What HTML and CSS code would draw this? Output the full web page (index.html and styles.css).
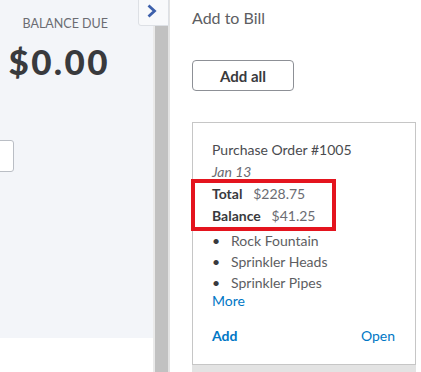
FILE: index.html
```html
<!DOCTYPE html>
<html lang="en">
<head>
  <meta charset="UTF-8">
  <title>Add to Bill</title>
  <link rel="stylesheet" href="styles.css">
</head>
<body>
  <div id="page">
    <div id="bill-panel">
      <div class="bill-body">
        <div class="balance">
          <span class="balance-label">BALANCE DUE</span>
          <span class="balance-amount">$0.00</span>
        </div>
        <div class="field-stub"></div>
      </div>
      <div class="bill-foot"></div>
    </div>

    <div id="splitter"></div>

    <button class="collapse-btn" title="Collapse">
      <svg width="12" height="14" viewBox="0 0 12 14"><path d="M2.5 1.5 L8.5 7 L2.5 12.5" fill="none" stroke="#3d60ab" stroke-width="2.8"/></svg>
    </button>

    <div id="drawer">
      <h2 class="drawer-title">Add to Bill</h2>
      <button class="add-all">Add all</button>

      <div class="card">
        <div class="card-title">Purchase Order #1005</div>
        <div class="card-date">Jan 13</div>
        <div class="totals">
          <div><b>Total</b>&nbsp;&nbsp; $228.75</div>
          <div><b>Balance</b>&nbsp;&nbsp; $41.25</div>
        </div>
        <ul class="items">
          <li>Rock Fountain</li>
          <li>Sprinkler Heads</li>
          <li>Sprinkler Pipes</li>
        </ul>
        <a class="more" href="#">More</a>
        <div class="card-actions">
          <a class="act-add" href="#">Add</a>
          <a class="act-open" href="#">Open</a>
        </div>
      </div>
      <div class="card next"></div>
    </div>
  </div>
</body>
</html>
```

FILE: styles.css
```css
body {
  margin:0;
  width:421px;
  height:372px;
  overflow:hidden;
  background:#fff;
  font-family:Lato, "Noto Sans", sans-serif;
  color:#393a3d;
}

#page {
  position:relative;
  display:flex;
  height:372px;
}

#bill-panel {
  width:153px;
  display:flex;
  flex-direction:column;
  flex:none;
}

.bill-body {
  height:338px;
  background:#f3f5f9;
  overflow:hidden;
}

.bill-foot {
  flex:1;
  background:#fff;
}

.balance {
  display:flex;
  flex-direction:column;
  align-items:flex-end;
  padding:15px 45px 0 0;
}

.balance-label {
  font-size:12.5px;
  line-height:18px;
  color:#6b6c72;
}

.balance-amount {
  font-size:35px;
  font-weight:900;
  line-height:44px;
  letter-spacing:2.4px;
  margin:6px -2px 0 0;
  color:#393a3d;
}

.field-stub {
  margin:57px 0 0 -10px;
  width:22px;
  height:30px;
  background:#fff;
  border:1px solid #babec5;
  border-radius:3px;
}

#splitter {
  width:13px;
  flex:none;
  background:#c1c1c1;
  border-left:2px solid #eaeaea;
  border-right:2px solid #e3e3e3;
}

.collapse-btn {
  position:absolute;
  left:138px;
  top:-1px;
  width:31px;
  height:27px;
  padding:0;
  background:#f8f9fb;
  border:1px solid #dde0e5;
  border-radius:0 0 0 3px;
  display:flex;
  align-items:center;
  justify-content:center;
}

.collapse-btn svg {
  margin:-3px 3px 0 0;
}

#drawer {
  flex:1;
  padding:0 5px 0 22px;
}

.drawer-title {
  margin:8px 0 0;
  font-size:16px;
  line-height:20px;
  font-weight:400;
  color:#5d5e62;
}

.add-all {
  display:block;
  margin-top:32px;
  width:102px;
  height:31px;
  background:#fff;
  border:1px solid #8d9096;
  border-radius:4px;
  font-family:Lato, "Noto Sans", sans-serif;
  font-size:15px;
  font-weight:700;
  color:#393a3d;
}

.card {
  margin-top:31px;
  border:1px solid #c6c6c6;
  padding:16px 20px 17px 19px;
  font-size:14px;
  line-height:22px;
}

.card-title {
  color:#4a4b4f;
}

.card-date {
  font-style:italic;
  color:#6b6c72;
}

.totals {
  box-sizing:border-box;
  width:137px;
  margin-left:-17px;
  padding-left:17px;
  outline:4px solid #e4141e;
  color:#6b6c72;
}

.totals b {
  color:#393a3d;
  font-weight:700;
}

.items {
  list-style:none;
  margin:3px 0 0;
  padding:0;
  line-height:21px;
  color:#5d5e62;
}

.items li::before {
  content:"•";
  display:inline-block;
  width:19px;
  color:#393a3d;
}

.more {
  display:block;
  margin-top:-2px;
  line-height:20px;
  color:#0077c5;
  text-decoration:none;
}

.card-actions {
  display:flex;
  justify-content:space-between;
  margin-top:14px;
}

.card-actions a {
  color:#0077c5;
  text-decoration:none;
}

.act-add {
  font-weight:700;
}

.card.next {
  margin-top:0;
  height:20px;
  padding:0;
  border:none;
  background:#e3e3e3;
}
```
